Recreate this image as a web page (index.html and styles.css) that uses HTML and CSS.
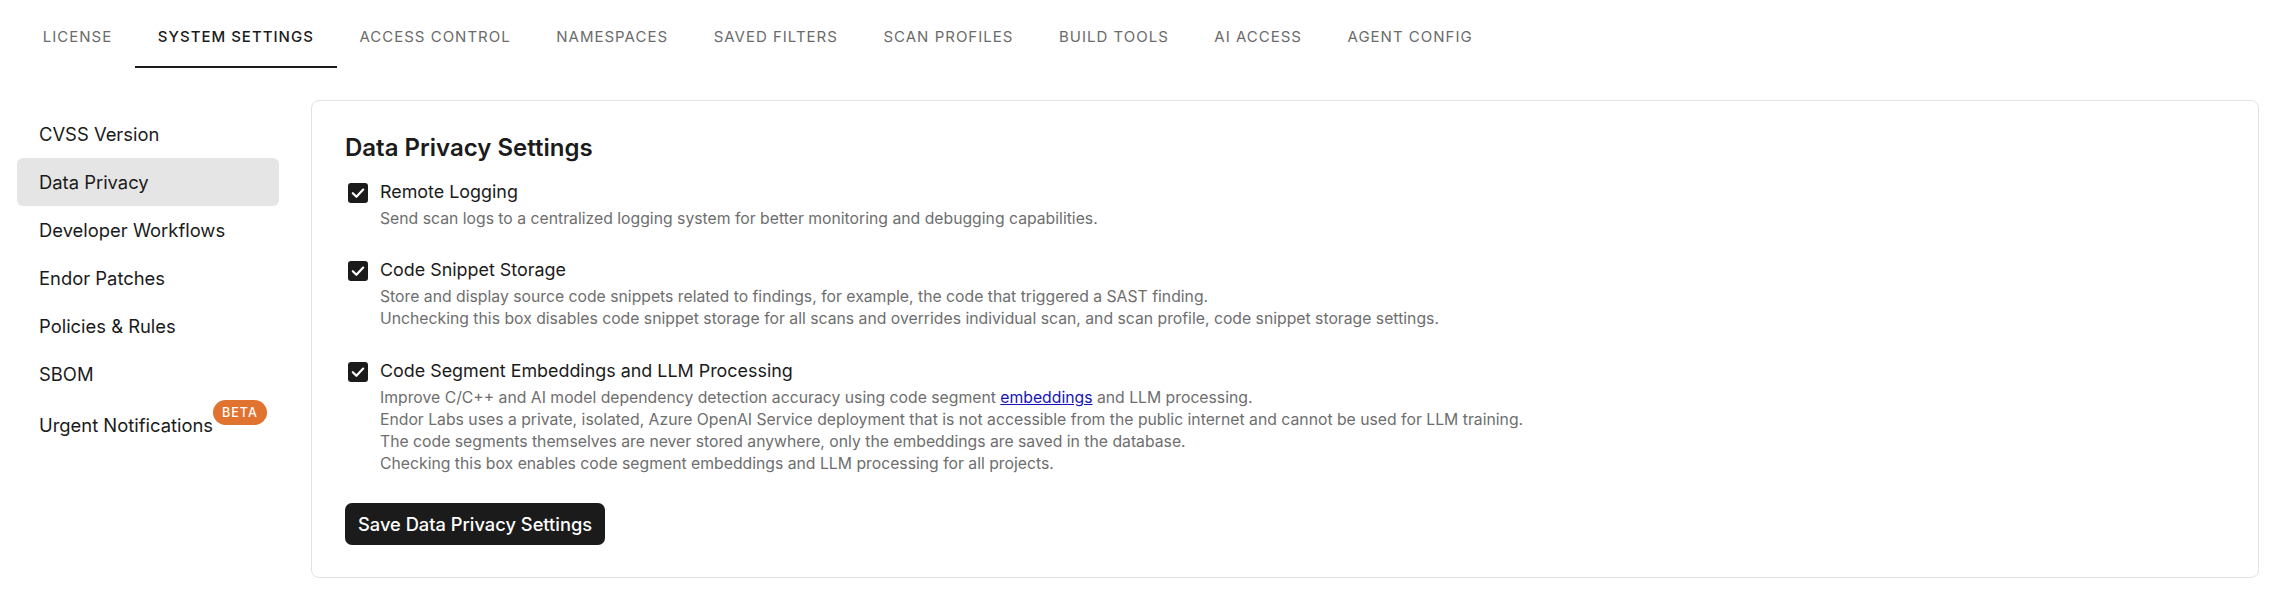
FILE: index.html
```html
<!DOCTYPE html>
<html lang="en">
<head>
<meta charset="utf-8">
<title>System Settings - Data Privacy</title>
<link rel="stylesheet" href="styles.css">
</head>
<body>
<nav class="tabs">
  <div class="tab">License</div>
  <div class="tab active">System Settings</div>
  <div class="tab">Access Control</div>
  <div class="tab">Namespaces</div>
  <div class="tab">Saved Filters</div>
  <div class="tab">Scan Profiles</div>
  <div class="tab">Build Tools</div>
  <div class="tab">AI Access</div>
  <div class="tab">Agent Config</div>
</nav>
<main class="main">
  <aside class="sidebar">
    <div class="side-item">CVSS Version</div>
    <div class="side-item selected">Data Privacy</div>
    <div class="side-item">Developer Workflows</div>
    <div class="side-item">Endor Patches</div>
    <div class="side-item">Policies &amp; Rules</div>
    <div class="side-item">SBOM</div>
    <div class="side-item last"><span class="badge-wrap">Urgent Notifications<span class="badge">BETA</span></span></div>
  </aside>
  <section class="card">
    <h2 class="card-title">Data Privacy Settings</h2>
    <div class="options">
      <div class="option">
        <span class="checkbox"><svg viewBox="0 0 20 20" width="20" height="20"><rect x="0" y="0" width="20" height="20" rx="3" fill="#1b1b1b"/><path d="M4.8 10.2 L8.4 13.8 L15.2 6.6" fill="none" stroke="#fff" stroke-width="2.2" stroke-linecap="round" stroke-linejoin="round"/></svg></span>
        <div class="option-text">
          <div class="option-label">Remote Logging</div>
          <div class="option-desc">Send scan logs to a centralized logging system for better monitoring and debugging capabilities.</div>
        </div>
      </div>
      <div class="option">
        <span class="checkbox"><svg viewBox="0 0 20 20" width="20" height="20"><rect x="0" y="0" width="20" height="20" rx="3" fill="#1b1b1b"/><path d="M4.8 10.2 L8.4 13.8 L15.2 6.6" fill="none" stroke="#fff" stroke-width="2.2" stroke-linecap="round" stroke-linejoin="round"/></svg></span>
        <div class="option-text">
          <div class="option-label">Code Snippet Storage</div>
          <div class="option-desc">Store and display source code snippets related to findings, for example, the code that triggered a SAST finding.<br>Unchecking this box disables code snippet storage for all scans and overrides individual scan, and scan profile, code snippet storage settings.</div>
        </div>
      </div>
      <div class="option">
        <span class="checkbox"><svg viewBox="0 0 20 20" width="20" height="20"><rect x="0" y="0" width="20" height="20" rx="3" fill="#1b1b1b"/><path d="M4.8 10.2 L8.4 13.8 L15.2 6.6" fill="none" stroke="#fff" stroke-width="2.2" stroke-linecap="round" stroke-linejoin="round"/></svg></span>
        <div class="option-text">
          <div class="option-label">Code Segment Embeddings and LLM Processing</div>
          <div class="option-desc">Improve C/C++ and AI model dependency detection accuracy using code segment <a class="link" href="#">embeddings</a> and LLM processing.<br>Endor Labs uses a private, isolated, Azure OpenAI Service deployment that is not accessible from the public internet and cannot be used for LLM training.<br>The code segments themselves are never stored anywhere, only the embeddings are saved in the database.<br>Checking this box enables code segment embeddings and LLM processing for all projects.</div>
        </div>
      </div>
    </div>
    <button class="save-btn" type="button">Save Data Privacy Settings</button>
  </section>
</main>
</body>
</html>
```

FILE: styles.css
```css
* { box-sizing: border-box; }

body {
  margin: 0;
  background: #ffffff;
  color: #1b1b1b;
  font-family: Inter, "Noto Sans", "Liberation Sans", sans-serif;
}

.tabs {
  display: flex;
  height: 68px;
  padding-left: 20px;
}

.tab {
  display: flex;
  align-items: center;
  padding: 7px 22.8px 0;
  border-bottom: 2px solid transparent;
  font-size: 15px;
  font-weight: 400;
  letter-spacing: 1px;
  text-transform: uppercase;
  color: #6b6b6b;
  white-space: nowrap;
}

.tab.active {
  color: #1b1b1b;
  font-weight: 500;
  border-bottom-color: #1b1b1b;
}

.main {
  display: flex;
  gap: 32px;
  padding: 32px 19px 17px 17px;
}

.sidebar {
  width: 262px;
  flex: none;
  padding-top: 10px;
  display: flex;
  flex-direction: column;
}

.side-item {
  height: 48px;
  display: flex;
  align-items: center;
  padding-left: 22px;
  border-radius: 6px;
  font-size: 18.4px;
  line-height: 24px;
  color: #1b1b1b;
}

.side-item.selected {
  background: #e5e5e5;
}

.side-item.last {
  padding-top: 5px;
}

.badge-wrap {
  position: relative;
}

.badge {
  position: absolute;
  left: 100%;
  top: -13px;
  height: 25px;
  padding: 0 9px;
  border-radius: 13px;
  background: #e0732f;
  color: #fff;
  font-size: 12.5px;
  font-weight: 500;
  letter-spacing: 1px;
  line-height: 25px;
}

.card {
  flex: 1;
  border: 1px solid #e3e3e3;
  border-radius: 8px;
  padding: 33px 33px 32px;
}

.card-title {
  margin: 0 0 17.5px;
  font-size: 24px;
  font-weight: 600;
  line-height: 28px;
}

.options {
  display: flex;
  flex-direction: column;
  gap: 28.5px;
}

.option {
  display: flex;
  gap: 12px;
}

.checkbox {
  flex: none;
  width: 20px;
  height: 20px;
  margin: 3px 0 0 3px;
}

.checkbox svg { display: block; }

.option-label {
  font-size: 17.9px;
  line-height: 24px;
  color: #1b1b1b;
  margin-bottom: 4px;
}

.option-desc {
  font-size: 15.75px;
  line-height: 22px;
  color: #6e6e6e;
}

.link {
  color: #1414b8;
  text-decoration: underline;
}

.save-btn {
  margin-top: 28px;
  height: 42px;
  padding: 0 13px;
  border: none;
  border-radius: 7px;
  background: #1b1b1b;
  color: #fff;
  font-family: inherit;
  font-size: 18.3px;
  font-weight: 500;
}
```
